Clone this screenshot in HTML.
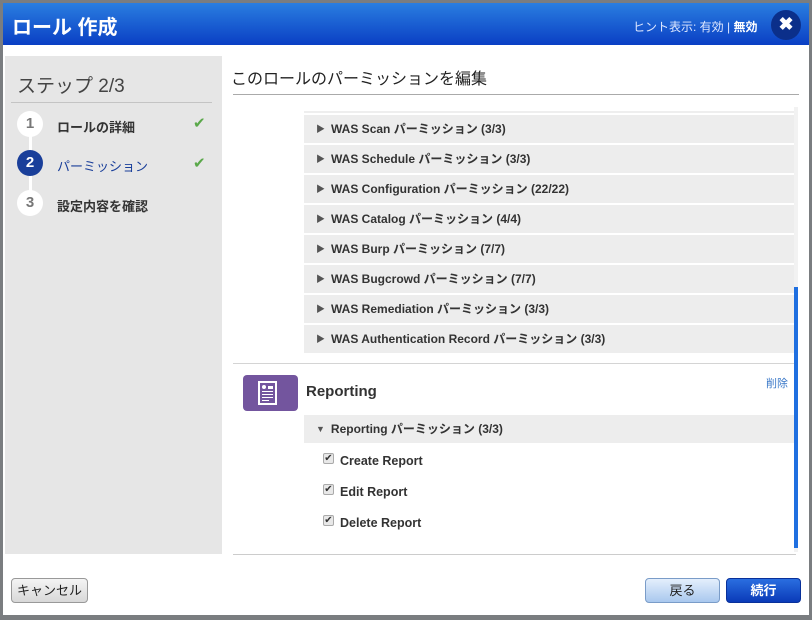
<!DOCTYPE html>
<html><head><meta charset="utf-8"><style>
*{margin:0;padding:0;box-sizing:border-box}
body{width:812px;height:620px;background:#7a7d80;font-family:"Liberation Sans","Noto Sans CJK JP",sans-serif;position:relative;overflow:hidden}
.win{position:absolute;left:3px;top:3px;width:806px;height:612px;background:#fff}
.hdr{position:absolute;left:0;top:0;width:806px;height:42px;background:linear-gradient(#2a7ee0,#0a3fc4);color:#fff}
.hdr .t{position:absolute;left:9px;top:8px;font-size:20px;font-weight:bold}
.hdr .h{position:absolute;left:630px;top:15px;font-size:12px;color:#dfe8ff}
.hdr .h b{color:#fff}
.x{position:absolute;left:768px;top:7px;width:30px;height:30px;border-radius:50%;background:#0b2f8a;color:#fff;font-weight:bold;font-size:18px;text-align:center;line-height:29px}
.left{position:absolute;left:2px;top:53px;width:217px;height:498px;background:#e6e6e6}
.left .s{position:absolute;left:12px;top:15px;font-size:19px;color:#444}
.left .ln{position:absolute;left:6px;top:46px;width:201px;height:1px;background:#c4c4c4}
.st{position:absolute;left:12px;width:26px;height:26px;border-radius:50%;background:#fff;color:#777;font-weight:bold;text-align:center;line-height:26px;font-size:15px}
.sl{position:absolute;left:52px;font-size:13px;color:#333;font-weight:bold}
.ck{position:absolute;left:188px;color:#5aa84a;font-size:15px}
.vl{position:absolute;left:24px;top:80px;width:3px;height:64px;background:#fff}
.ttl{position:absolute;left:228px;top:62px;font-size:16px;color:#222}
.tl{position:absolute;left:230px;top:91px;width:566px;height:1px;background:#aaa}
.row{position:absolute;left:301px;width:492px;height:28px;background:#ededed;font-size:12px;font-weight:bold;color:#333;line-height:28px;padding-left:12px}
.row i{font-style:normal;font-size:9px;color:#555;margin-right:6px;vertical-align:1px}
.sep{position:absolute;left:230px;width:563px;height:1px;background:#d4d4d4}
.icon{position:absolute;left:240px;top:372px;width:55px;height:36px;background:#73559e;border-radius:4px}
.cb{position:absolute;left:320px;width:11px;height:11px;border:1px solid #aaa;background:#e8e8e8;border-radius:2px;font-size:10px;line-height:9px;text-align:center;color:#333}
.cl{position:absolute;left:337px;font-size:12.5px;color:#333;font-weight:bold}
.btn{position:absolute;height:25px;border-radius:4px;font-size:13px;text-align:center;line-height:23px}
</style></head><body>
<div class="win">
<div class="hdr"><div class="t">ロール 作成</div><div class="h">ヒント表示: 有効 | <b>無効</b></div><div class="x">✖</div></div>
<div class="left">
<div class="s">ステップ 2/3</div><div class="ln"></div>
<div class="vl"></div>
<div class="st" style="top:55px">1</div><div class="sl" style="top:61px">ロールの詳細</div><div class="ck" style="top:58px">✔</div>
<div class="st" style="top:94px;background:#1a3f9a;color:#fff">2</div><div class="sl" style="top:100px;color:#1a3f9a;font-weight:normal">パーミッション</div><div class="ck" style="top:98px">✔</div>
<div class="st" style="top:134px">3</div><div class="sl" style="top:140px">設定内容を確認</div>
</div>
<div class="ttl">このロールのパーミッションを編集</div><div class="tl"></div>
<div style="position:absolute;left:301px;top:108px;width:492px;height:2px;background:#eee"></div>
<div class="row" style="top:112px"><i>▶</i>WAS Scan パーミッション (3/3)</div>
<div class="row" style="top:142px"><i>▶</i>WAS Schedule パーミッション (3/3)</div>
<div class="row" style="top:172px"><i>▶</i>WAS Configuration パーミッション (22/22)</div>
<div class="row" style="top:202px"><i>▶</i>WAS Catalog パーミッション (4/4)</div>
<div class="row" style="top:232px"><i>▶</i>WAS Burp パーミッション (7/7)</div>
<div class="row" style="top:262px"><i>▶</i>WAS Bugcrowd パーミッション (7/7)</div>
<div class="row" style="top:292px"><i>▶</i>WAS Remediation パーミッション (3/3)</div>
<div class="row" style="top:322px"><i>▶</i>WAS Authentication Record パーミッション (3/3)</div>
<div class="sep" style="top:360px"></div>
<div class="icon"><svg width="55" height="36"><rect x="15" y="6" width="19" height="24" fill="#fff"/><rect x="17" y="8" width="15" height="20" fill="#73559e"/><circle cx="21" cy="12" r="2" fill="#fff"/><rect x="25" y="11" width="5" height="3" fill="#fff"/><rect x="19" y="16" width="11" height="1" fill="#fff"/><rect x="19" y="19" width="11" height="1" fill="#fff"/><rect x="19" y="22" width="11" height="1" fill="#fff"/><rect x="19" y="25" width="7" height="1" fill="#fff"/></svg></div>
<div style="position:absolute;left:303px;top:380px;font-size:15px;font-weight:bold;color:#333">Reporting</div>
<div style="position:absolute;left:763px;top:372px;font-size:11px;color:#3a78c8">削除</div>
<div class="row" style="top:412px"><i>▼</i>Reporting パーミッション (3/3)</div>
<div class="cb" style="top:450px">✔</div><div class="cl" style="top:451px">Create Report</div>
<div class="cb" style="top:481px">✔</div><div class="cl" style="top:482px">Edit Report</div>
<div class="cb" style="top:512px">✔</div><div class="cl" style="top:513px">Delete Report</div>
<div class="sep" style="top:551px;background:#ccc"></div>
<div style="position:absolute;left:791px;top:104px;width:4px;height:445px;background:#f2f2f2"></div>
<div style="position:absolute;left:791px;top:284px;width:4px;height:261px;background:#1f6fe0"></div>
<div class="btn" style="left:8px;top:575px;width:77px;background:linear-gradient(#f4f4f4,#d8d8d8);border:1px solid #999;color:#222">キャンセル</div>
<div class="btn" style="left:642px;top:575px;width:75px;background:linear-gradient(#e4effc,#a9c8ee);border:1px solid #7a9cc8;color:#222">戻る</div>
<div class="btn" style="left:723px;top:575px;width:75px;background:linear-gradient(#2a6ee0,#0a3ab8);border:1px solid #08309a;color:#fff;font-weight:bold">続行</div>
</div>
</body></html>
